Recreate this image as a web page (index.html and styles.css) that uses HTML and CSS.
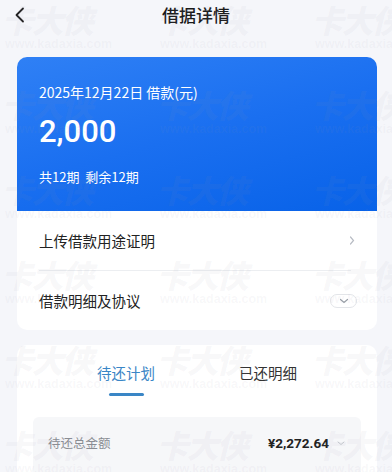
FILE: index.html
```html
<!DOCTYPE html>
<html lang="zh-CN">
<head>
<meta charset="utf-8">
<title>借据详情</title>
<link rel="stylesheet" href="styles.css">
</head>
<body>
<header class="nav">
  <svg class="back" width="12" height="16" viewBox="0 0 12 16"><polyline points="9,1.5 2.5,8 9,14.5" fill="none" stroke="#222" stroke-width="1.8" stroke-linecap="round" stroke-linejoin="round"/></svg>
  <h1 class="title">借据详情</h1>
</header>

<main class="content">
  <section class="loan">
    <div class="loan-head">
      <p class="loan-date">2025年12月22日 借款(元)</p>
      <p class="loan-amount">2,000</p>
      <p class="loan-terms">共12期&nbsp;&nbsp;剩余12期</p>
    </div>
    <div class="loan-rows">
      <div class="row">
        <span>上传借款用途证明</span>
        <svg class="chev-r" width="6" height="9" viewBox="0 0 6 9"><polyline points="1.5,1 4.5,4.5 1.5,8" fill="none" stroke="#b8bcc4" stroke-width="1.2" stroke-linecap="round"/></svg>
      </div>
      <div class="divider"></div>
      <div class="row">
        <span>借款明细及协议</span>
        <span class="pill"><svg width="10" height="6" viewBox="0 0 10 6"><polyline points="1.5,1.5 5,4.5 8.5,1.5" fill="none" stroke="#9aa0a8" stroke-width="1.2" stroke-linecap="round"/></svg></span>
      </div>
    </div>
  </section>

  <section class="plan">
    <div class="tabs">
      <div class="tab active">待还计划</div>
      <div class="tab">已还明细</div>
    </div>
    <div class="summary">
      <span class="summary-label">待还总金额</span>
      <span class="summary-value">¥2,272.64
        <svg width="8" height="5" viewBox="0 0 8 5"><polyline points="1,1 4,3.5 7,1" fill="none" stroke="#c4c8ce" stroke-width="1" stroke-linecap="round"/></svg>
      </span>
    </div>
  </section>
</main>

<div class="watermark" aria-hidden="true">
  <div class="wm"><b>卡大侠</b><i>www.kadaxia.com</i></div>
  <div class="wm"><b>卡大侠</b><i>www.kadaxia.com</i></div>
  <div class="wm"><b>卡大侠</b><i>www.kadaxia.com</i></div>
  <div class="wm"><b>卡大侠</b><i>www.kadaxia.com</i></div>
  <div class="wm"><b>卡大侠</b><i>www.kadaxia.com</i></div>
  <div class="wm"><b>卡大侠</b><i>www.kadaxia.com</i></div>
  <div class="wm"><b>卡大侠</b><i>www.kadaxia.com</i></div>
  <div class="wm"><b>卡大侠</b><i>www.kadaxia.com</i></div>
  <div class="wm"><b>卡大侠</b><i>www.kadaxia.com</i></div>
  <div class="wm"><b>卡大侠</b><i>www.kadaxia.com</i></div>
  <div class="wm"><b>卡大侠</b><i>www.kadaxia.com</i></div>
  <div class="wm"><b>卡大侠</b><i>www.kadaxia.com</i></div>
  <div class="wm"><b>卡大侠</b><i>www.kadaxia.com</i></div>
  <div class="wm"><b>卡大侠</b><i>www.kadaxia.com</i></div>
  <div class="wm"><b>卡大侠</b><i>www.kadaxia.com</i></div>
  <div class="wm"><b>卡大侠</b><i>www.kadaxia.com</i></div>
  <div class="wm"><b>卡大侠</b><i>www.kadaxia.com</i></div>
  <div class="wm"><b>卡大侠</b><i>www.kadaxia.com</i></div>
</div>
</body>
</html>
```

FILE: styles.css
```css
* { box-sizing: border-box; }
html, body { margin: 0; padding: 0; }
body {
  width: 392px;
  height: 472px;
  overflow: hidden;
  background: #f5f6fa;
  font-family: "Noto Sans CJK SC", "Noto Sans", sans-serif;
  color: #222;
  position: relative;
}
p { margin: 0; }

.nav {
  height: 30px;
  display: flex;
  align-items: center;
  justify-content: center;
  position: relative;
}
.back {
  position: absolute;
  left: 14px;
  top: 7px;
}
.title {
  margin: 0;
  font-size: 17px;
  font-weight: 500;
  line-height: 30px;
  color: #1a1a1a;
}

.content {
  padding: 27px 15px 0 17px;
  display: flex;
  flex-direction: column;
  gap: 15px;
}

.loan {
  border-radius: 10px;
  background: #fff;
  overflow: hidden;
}
.loan-head {
  background: linear-gradient(165deg, #2f80f5 0%, #1a6ff0 50%, #0862e8 100%);
  color: #fff;
  padding: 26px 22px 25px;
}
.loan-date {
  font-size: 14px;
  line-height: 18px;
}
.loan-amount {
  font-family: Roboto, "Noto Sans", sans-serif;
  font-size: 31px;
  font-weight: 500;
  line-height: 40px;
  margin-top: 11px;
}
.loan-terms {
  font-size: 13px;
  line-height: 18px;
  margin-top: 16px;
}

.loan-rows {
  padding: 0 22px;
}
.row {
  height: 59px;
  display: flex;
  align-items: center;
  justify-content: space-between;
  font-size: 14.5px;
  color: #222;
}
.divider {
  height: 1px;
  background: #eceef1;
  margin-right: 4px;
}
.pill {
  width: 27px;
  height: 14px;
  border: 1px solid #e3e5e9;
  border-radius: 8px;
  display: flex;
  align-items: center;
  justify-content: center;
  margin-right: -2px;
}

.plan {
  background: #fff;
  border-radius: 10px;
  height: 200px;
  padding: 0 16px;
}
.tabs {
  display: flex;
  justify-content: center;
  gap: 84px;
  padding-top: 17px;
}
.tab {
  font-size: 14.5px;
  line-height: 22px;
  color: #333;
  position: relative;
  padding-bottom: 16px;
}
.tab.active {
  color: #3a86c6;
}
.tab.active::after {
  content: "";
  position: absolute;
  left: 50%;
  bottom: 4px;
  width: 35px;
  height: 3px;
  margin-left: -17.5px;
  border-radius: 2px;
  background: #3a86c6;
}
.summary {
  margin-top: 17px;
  background: #f6f7f9;
  border-radius: 6px;
  height: 80px;
  padding: 16px 16px 0 15px;
  display: flex;
  justify-content: space-between;
  align-items: flex-start;
}
.summary-label {
  font-size: 12.5px;
  color: #8a8d93;
  line-height: 20px;
}
.summary-value {
  font-family: Roboto, "Noto Sans", sans-serif;
  font-size: 13.5px;
  font-weight: 700;
  color: #222;
  line-height: 20px;
  display: flex;
  align-items: center;
  gap: 8px;
}

.watermark {
  position: absolute;
  inset: 0;
  overflow: hidden;
  pointer-events: none;
  display: grid;
  grid-template-columns: repeat(3, 155px);
  grid-auto-rows: 85px;
  padding: 4px 0 0 5px;
}
.wm {
  display: flex;
  flex-direction: column;
  width: 105px;
}
.wm b {
  font-size: 32px;
  line-height: 30px;
  font-weight: 900;
  font-style: normal;
  transform: skewX(-14deg);
  letter-spacing: -2px;
  color: rgba(150, 150, 170, 0.07);
}
.wm i {
  font-family: "Liberation Sans", Arial, sans-serif;
  font-style: normal;
  font-weight: 700;
  font-size: 12.5px;
  line-height: 14px;
  margin-top: 3px;
  color: rgba(150, 150, 170, 0.07);
}
```
